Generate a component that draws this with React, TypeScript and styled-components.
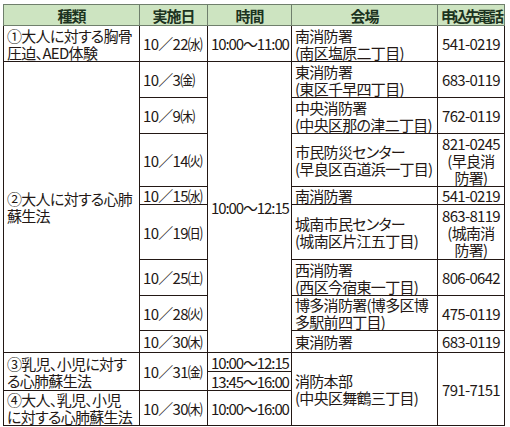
import styled, { createGlobalStyle } from "styled-components";

const GlobalStyle = createGlobalStyle`
  body {
    margin: 0;
    background: #fff;
  }
`;

const Wrap = styled.div`
  padding: 4px 0 0 3px;
`;

const Table = styled.table`
  border-collapse: collapse;
  table-layout: fixed;
  width: 501px;
  font-family: "Noto Sans CJK JP", "Noto Sans", sans-serif;
  font-size: 15px;
  line-height: 17px;
  letter-spacing: -0.7px;
  font-feature-settings: "palt";
  color: #231815;
  border: 1.5px solid #231815;
`;

const Head = styled.th<{ $tight?: boolean }>`
  height: 20px;
  padding: 0;
  background: #cde4c1;
  border: 1px solid #6f7f6c;
  font-weight: bold;
  color: #1c3320;
  letter-spacing: ${(p) => (p.$tight ? "-3px" : "-1px")};
  text-align: center;
  vertical-align: middle;
`;

const Cell = styled.td<{ $center?: boolean; $time?: boolean; $h?: number }>`
  height: ${(p) => (p.$h ? `${p.$h}px` : "auto")};
  padding: 0 ${(p) => (p.$time ? "1px" : "3px")} 0 3px;
  border: 1px solid #231815;
  text-align: ${(p) => (p.$center ? "center" : "left")};
  letter-spacing: ${(p) => (p.$time ? "-1.1px" : "inherit")};
  vertical-align: middle;
  white-space: nowrap;
  overflow: hidden;
`;

function Lines({ text }: { text: string[] }) {
  return (
    <>
      {text.map((t, i) => (
        <span key={i}>
          {i > 0 && <br />}
          {t}
        </span>
      ))}
    </>
  );
}

type Venue = { date: string; place: string[]; tel: string[]; h: number };

const cpr: Venue[] = [
  { date: "10／3㈮", place: ["東消防署", "(東区千早四丁目)"], tel: ["683-0119"], h: 35 },
  { date: "10／9㈭", place: ["中央消防署", "(中央区那の津二丁目)"], tel: ["762-0119"], h: 35 },
  { date: "10／14㈫", place: ["市民防災センター", "(早良区百道浜一丁目)"], tel: ["821-0245", "(早良消", "防署)"], h: 52 },
  { date: "10／15㈬", place: ["南消防署"], tel: ["541-0219"], h: 16 },
  { date: "10／19㈰", place: ["城南市民センター", "(城南区片江五丁目)"], tel: ["863-8119", "(城南消", "防署)"], h: 54 },
  { date: "10／25㈯", place: ["西消防署", "(西区今宿東一丁目)"], tel: ["806-0642"], h: 35 },
  { date: "10／28㈫", place: ["博多消防署(博多区博", "多駅前四丁目)"], tel: ["475-0119"], h: 33 },
  { date: "10／30㈭", place: ["東消防署"], tel: ["683-0119"], h: 21 },
];

export default function App() {
  return (
    <Wrap>
      <GlobalStyle />
      <Table>
        <colgroup>
          <col style={{ width: 136 }} />
          <col style={{ width: 68 }} />
          <col style={{ width: 84 }} />
          <col style={{ width: 146 }} />
          <col style={{ width: 67 }} />
        </colgroup>
        <thead>
          <tr>
            <Head>種類</Head>
            <Head>実施日</Head>
            <Head>時間</Head>
            <Head>会場</Head>
            <Head $tight>申込先電話</Head>
          </tr>
        </thead>
        <tbody>
          <tr>
            <Cell $h={35}>
              <Lines text={["①大人に対する胸骨", "圧迫、AED体験"]} />
            </Cell>
            <Cell>10／22㈬</Cell>
            <Cell $time>10:00～11:00</Cell>
            <Cell>
              <Lines text={["南消防署", "(南区塩原二丁目)"]} />
            </Cell>
            <Cell $center>541-0219</Cell>
          </tr>
          {cpr.map((v, i) => (
            <tr key={v.date}>
              {i === 0 && (
                <Cell rowSpan={cpr.length}>
                  <Lines text={["②大人に対する心肺", "蘇生法"]} />
                </Cell>
              )}
              <Cell $h={v.h}>{v.date}</Cell>
              {i === 0 && (
                <Cell $time rowSpan={cpr.length}>
                  10:00～12:15
                </Cell>
              )}
              <Cell>
                <Lines text={v.place} />
              </Cell>
              <Cell $center>
                <Lines text={v.tel} />
              </Cell>
            </tr>
          ))}
          <tr>
            <Cell rowSpan={2}>
              <Lines text={["③乳児、小児に対す", "る心肺蘇生法"]} />
            </Cell>
            <Cell rowSpan={2}>10／31㈮</Cell>
            <Cell $time $h={18}>
              10:00～12:15
            </Cell>
            <Cell rowSpan={3}>
              <Lines text={["消防本部", "(中央区舞鶴三丁目)"]} />
            </Cell>
            <Cell rowSpan={3} $center>
              791-7151
            </Cell>
          </tr>
          <tr>
            <Cell $time $h={18}>
              13:45～16:00
            </Cell>
          </tr>
          <tr>
            <Cell $h={34}>
              <Lines text={["④大人、乳児、小児", "に対する心肺蘇生法"]} />
            </Cell>
            <Cell>10／30㈭</Cell>
            <Cell $time>10:00～16:00</Cell>
          </tr>
        </tbody>
      </Table>
    </Wrap>
  );
}
